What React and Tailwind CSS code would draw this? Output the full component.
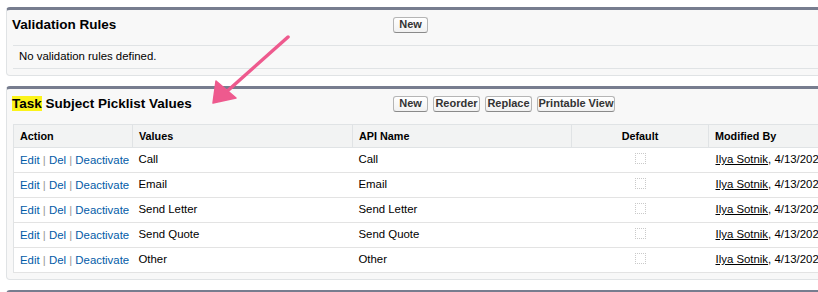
const values = ['Call', 'Email', 'Send Letter', 'Send Quote', 'Other'];

function Btn({ children, w }) {
  return (
    <button
      className={`h-[16px] rounded-[3px] border border-[#b5b5b5] border-b-[#8a8a8a] bg-gradient-to-b from-white to-[#f1f1f1] text-[11px] font-bold leading-none text-[#333] ${w}`}
    >
      {children}
    </button>
  );
}

function Panel({ title, buttons, children }) {
  return (
    <div className="w-[840px] rounded-[4px] border border-t-[3px] border-[#e0e3e5] border-t-[#777d8f] bg-[#f8f8f8]">
      {/* header: title column is fixed so buttons line up across panels */}
      <div className="flex h-[35px] items-center pb-[12px] pt-[6px]">
        <div className="w-[386px] pl-[5px] text-[13.5px] font-bold leading-[17px] text-black">{title}</div>
        <div className="flex gap-[5px]">{buttons}</div>
      </div>
      <div className="pb-[6px] pl-[6px]">{children}</div>
    </div>
  );
}

function Checkbox() {
  return <span className="inline-block h-[11px] w-[11px] border border-dotted border-[#c9c9c9] bg-white" />;
}

export default function App() {
  return (
    <div
      className="relative h-[292px] w-[818px] overflow-hidden bg-white pl-[6px] pt-[7px]"
      style={{ fontFamily: '"Liberation Sans", Arial, Helvetica, sans-serif' }}
    >
      <div className="flex flex-col gap-[10px]">
        <Panel title="Validation Rules" buttons={<Btn w="w-[35px]">New</Btn>}>
          <div className="flex h-[24px] items-center border-y border-[#e0e3e5] bg-[#f8f8f8] pl-[6px] text-[11.4px] text-black">
            No validation rules defined.
          </div>
        </Panel>

        <Panel
          title={
            <>
              <span className="bg-[#fbf31a]">Task</span> Subject Picklist Values
            </>
          }
          buttons={
            <>
              <Btn w="w-[35px]">New</Btn>
              <Btn w="w-[47px]">Reorder</Btn>
              <Btn w="w-[47px]">Replace</Btn>
              <Btn w="w-[78px]">Printable View</Btn>
            </>
          }
        >
          <table className="w-[830px] table-fixed border-collapse border-l border-[#e0e3e5] bg-white text-[11.4px] text-black">
            <thead>
              <tr className="h-[23px] border-y border-[#e0e3e5] bg-[#f2f3f3] text-[10.8px] font-bold">
                <th className="w-[119px] border-r border-[#e0e3e5] pl-[6px] text-left">Action</th>
                <th className="w-[220px] border-r border-[#e0e3e5] pl-[6px] text-left">Values</th>
                <th className="w-[219px] border-r border-[#e0e3e5] pl-[6px] text-left">API Name</th>
                <th className="w-[137px] border-r border-[#e0e3e5] text-center">Default</th>
                <th className="pl-[6px] text-left">Modified By</th>
              </tr>
            </thead>
            <tbody>
              {values.map((v) => (
                <tr key={v} className="h-[25px] border-b border-[#e3e3e3]">
                  <td className="whitespace-nowrap pl-[6px] pt-[2px] text-[#015ba7]">
                    Edit <span className="text-[#999]">|</span> Del <span className="text-[#999]">|</span> Deactivate
                  </td>
                  <td className="pl-[6px]">{v}</td>
                  <td className="pl-[6px]">{v}</td>
                  <td className="text-center align-middle leading-none">
                    <Checkbox />
                  </td>
                  <td className="whitespace-nowrap pl-[7px]">
                    <span className="underline">Ilya Sotnik</span>, 4/13/202
                  </td>
                </tr>
              ))}
            </tbody>
          </table>
        </Panel>

        <Panel title="" buttons={null}>
          <div className="h-[20px]" />
        </Panel>
      </div>

      {/* annotation arrow */}
      <svg className="pointer-events-none absolute left-0 top-0" width="818" height="292">
        <line x1="288" y1="37" x2="224" y2="94" stroke="#ee5a8e" strokeWidth="3.5" strokeLinecap="round" />
        <polygon points="213,103 216,81 236,98" fill="#ee5a8e" strokeLinejoin="round" stroke="#ee5a8e" strokeWidth="1.5" />
      </svg>
    </div>
  );
}
